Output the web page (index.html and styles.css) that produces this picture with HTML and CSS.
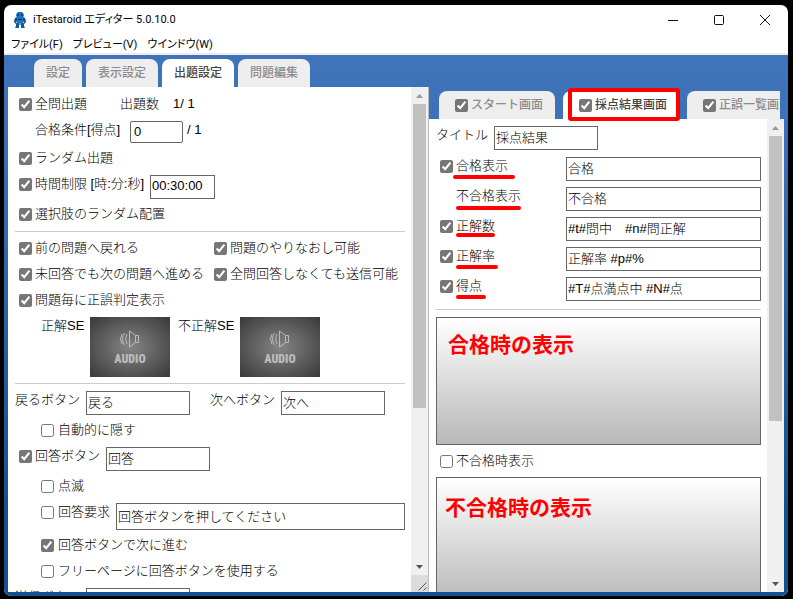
FILE: index.html
```html
<!DOCTYPE html>
<html lang="ja">
<head>
<meta charset="utf-8">
<title>iTestaroid エディター 5.0.10.0</title>
<link rel="stylesheet" href="styles.css">
</head>
<body>
<div class="window">
  <header class="titlebar">
    <svg class="app-icon" viewBox="0 0 12 16" aria-hidden="true">
      <path d="M3 1l1-1h4l1 1 1 2-1 3H3L2 3z" fill="#1670c0"/>
      <path d="M1 6l2-1h6l2 1 1 3-1 3-1-1-1-2H3L2 11l-1 1-1-3z" fill="#0f4f8c"/>
      <path d="M3 5h6v6H3z" fill="#1a78c8"/>
      <path d="M2 11h3v5H1l1-2zM7 11h3v3l1 2H7z" fill="#135a9a"/>
      <path d="M3 2.500h2v1H3zM7 2.500h2v1H7zM4 7h4v1H4zM5.500 11h1v2h-1z" fill="#082b4c"/>
    </svg>
    <h1 class="app-title">iTestaroid エディター 5.0.10.0</h1>
    <div class="window-buttons">
      <button type="button" aria-label="最小化"><svg viewBox="0 0 12 12"><path d="M1 6.500h10"/></svg></button>
      <button type="button" aria-label="最大化"><svg viewBox="0 0 12 12"><rect x="1.500" y="1.500" width="9" height="9" rx="1"/></svg></button>
      <button type="button" aria-label="閉じる"><svg viewBox="0 0 12 12"><path d="M1 1l10 10M11 1L1 11"/></svg></button>
    </div>
  </header>
  <nav class="menubar">
    <button type="button">ファイル(F)</button>
    <button type="button">プレビュー(V)</button>
    <button type="button">ウインドウ(W)</button>
  </nav>
  <main class="workspace">
    <section class="side side-left">
      <div class="tabs tabs-left">
        <button type="button" class="tab">設定</button>
        <button type="button" class="tab">表示設定</button>
        <button type="button" class="tab active">出題設定</button>
        <button type="button" class="tab">問題編集</button>
      </div>
      <div class="pane">
        <form class="content content-left">
          <div class="row">
            <label class="check col-short"><input type="checkbox" checked>全問出題</label>
            <span class="count-label">出題数</span><span>1/ 1</span>
          </div>
          <div class="field-row inset">
            <label class="caption caption-pass" for="pass">合格条件[得点]</label>
            <input class="text number" id="pass" type="text" value="0"><span class="caption">/ 1</span>
          </div>
          <div class="row"><label class="check"><input type="checkbox" checked>ランダム出題</label></div>
          <div class="field-row">
            <label class="check caption-time"><input type="checkbox" checked>時間制限 [時:分:秒]</label>
            <input class="text time" type="text" value="00:30:00" aria-label="時間制限">
          </div>
          <div class="row"><label class="check"><input type="checkbox" checked>選択肢のランダム配置</label></div>
          <hr>
          <div class="pair">
            <label class="check"><input type="checkbox" checked>前の問題へ戻れる</label>
            <label class="check"><input type="checkbox" checked>問題のやりなおし可能</label>
            <label class="check"><input type="checkbox" checked>未回答でも次の問題へ進める</label>
            <label class="check"><input type="checkbox" checked>全問回答しなくても送信可能</label>
            <label class="check"><input type="checkbox" checked>問題毎に正誤判定表示</label>
          </div>
          <div class="media-row">
            <span class="caption se-ok">正解SE</span>
            <button type="button" class="audio">
              <svg viewBox="0 0 20 18" aria-hidden="true"><path d="M9.500 1v16l6-4.500V5.500zM15.500 5.500h3v7h-3M7 4q-3 5 0 10M4.500 3q-4 6 0 12M2 4q-3 5 0 10"/></svg>
              <span>AUDIO</span>
            </button>
            <span class="caption se-ng">不正解SE</span>
            <button type="button" class="audio">
              <svg viewBox="0 0 20 18" aria-hidden="true"><path d="M9.500 1v16l6-4.500V5.500zM15.500 5.500h3v7h-3M7 4q-3 5 0 10M4.500 3q-4 6 0 12M2 4q-3 5 0 10"/></svg>
              <span>AUDIO</span>
            </button>
          </div>
          <hr class="after-media">
          <div class="field-row">
            <label class="caption caption-button" for="back">戻るボタン</label>
            <input class="text short" id="back" type="text" value="戻る">
            <label class="caption caption-next" for="next">次へボタン</label>
            <input class="text short" id="next" type="text" value="次へ">
          </div>
          <div class="row sub"><label class="check"><input type="checkbox">自動的に隠す</label></div>
          <div class="field-row">
            <label class="check caption-answer"><input type="checkbox" checked>回答ボタン</label>
            <input class="text short" type="text" value="回答" aria-label="回答ボタン">
          </div>
          <div class="row sub"><label class="check"><input type="checkbox">点滅</label></div>
          <div class="field-row sub">
            <label class="check caption-request"><input type="checkbox">回答要求</label>
            <input class="text wide" type="text" value="回答ボタンを押してください" aria-label="回答要求">
          </div>
          <div class="row sub"><label class="check"><input type="checkbox" checked>回答ボタンで次に進む</label></div>
          <div class="row sub"><label class="check"><input type="checkbox">フリーページに回答ボタンを使用する</label></div>
          <div class="field-row">
            <label class="caption caption-button" for="send">送信ボタン</label>
            <input class="text short" id="send" type="text">
          </div>
        </form>
        <div class="scroll" aria-hidden="true">
          <i class="arrow up"></i>
          <div class="track track-left"><div class="thumb"></div></div>
          <i class="arrow down"></i>
          <svg class="grip" viewBox="0 0 17 17"><path d="M7.500 15.500l8-8M12.500 15.500l3-3"/></svg>
        </div>
      </div>
    </section>
    <section class="side side-right">
      <div class="tabs tabs-right">
        <div class="tab"><label class="check"><input type="checkbox" checked>スタート画面</label></div>
        <div class="tab active marked"><label class="check"><input type="checkbox" checked>採点結果画面</label></div>
        <div class="tab"><label class="check"><input type="checkbox" checked>正誤一覧画面</label></div>
      </div>
      <div class="pane">
        <form class="content content-right">
          <div class="field-row title-row">
            <label class="caption caption-title" for="title">タイトル</label>
            <input class="text short" id="title" type="text" value="採点結果">
          </div>
          <div class="results">
            <label class="check"><input type="checkbox" checked><span class="mark mark-pass">合格表示</span></label>
            <input class="text" type="text" value="合格" aria-label="合格表示">
            <label class="plain" for="fail"><span class="mark mark-fail">不合格表示</span></label>
            <input class="text" id="fail" type="text" value="不合格">
            <label class="check"><input type="checkbox" checked><span class="mark mark-count">正解数</span></label>
            <input class="text" type="text" value="#t#問中　#n#問正解" aria-label="正解数">
            <label class="check"><input type="checkbox" checked><span class="mark mark-rate">正解率</span></label>
            <input class="text" type="text" value="正解率 #p#%" aria-label="正解率">
            <label class="check"><input type="checkbox" checked><span class="mark mark-score">得点</span></label>
            <input class="text" type="text" value="#T#点満点中 #N#点" aria-label="得点">
          </div>
          <hr>
          <div class="preview preview-pass">合格時の表示</div>
          <div class="row fail-row"><label class="check"><input type="checkbox">不合格時表示</label></div>
          <div class="preview preview-fail">不合格時の表示</div>
        </form>
        <div class="scroll" aria-hidden="true">
          <i class="arrow up"></i>
          <div class="track track-right"><div class="thumb"></div></div>
          <i class="arrow down"></i>
        </div>
      </div>
    </section>
  </main>
</div>
</body>
</html>
```
FILE: styles.css
```css
* {
  box-sizing: border-box;
}

body {
  margin: 0;
  height: 100vh;
  padding: 5px 5px 3px 4px;
  background: #000;
  color: #000;
  font: 300 13px/18px "Liberation Sans", "Noto Sans CJK JP", sans-serif;
  overflow: hidden;
}

button,
input {
  font: inherit;
  color: inherit;
}

button {
  border: 0;
  padding: 0;
  background: none;
}

.window {
  display: flex;
  flex-direction: column;
  height: 100%;
  border-radius: 7px;
  overflow: hidden;
  background: #fff;
}

.titlebar {
  display: flex;
  align-items: center;
  height: 29px;
  padding-left: 10px;
}

.app-icon {
  width: 12px;
  height: 16px;
}

.app-title {
  flex: 1;
  margin: 0 0 0 7px;
  font: 400 11px/18px Roboto, "Noto Sans CJK JP", sans-serif;
  font-feature-settings: "palt";
}

.window-buttons {
  display: flex;
}

.window-buttons button {
  width: 46px;
  height: 28px;
}

.window-buttons svg {
  display: block;
  width: 12px;
  height: 12px;
  margin: 0 auto;
  fill: none;
  stroke: #111;
}

.menubar {
  display: flex;
  gap: 10px;
  height: 21px;
  padding-left: 7px;
  border-bottom: 2px solid #eee;
  font: 400 11px/21px Roboto, "Noto Sans CJK JP", sans-serif;
  font-feature-settings: "palt";
}

.workspace {
  flex: 1;
  min-height: 0;
  display: flex;
  padding: 0 4px 4px;
  background: linear-gradient(#3f74bb, #3b6fb5 20%, #155090 85%);
}

.side {
  display: flex;
  flex-direction: column;
  min-width: 0;
}

.side-left {
  flex: 421 1 0;
}

.side-right {
  flex: 355 1 0;
}

.tabs {
  display: flex;
}

.tabs-left {
  gap: 4px;
  padding: 4px 0 0 26px;
}

.tabs-right {
  position: relative;
  z-index: 1;
  gap: 8px;
  margin-right: 4px;
  padding: 36px 0 0 10px;
  clip-path: inset(0 0 -4px 0);
}

.tab {
  flex: none;
  height: 28px;
  padding: 0 12px;
  border-radius: 8px 8px 0 0;
  background: #eee;
  color: #8c8c8c;
  font-size: 12px;
  font-weight: 500;
  line-height: 28px;
}

.tab.active {
  background: #fff;
  color: #444;
}

.tabs-right .check {
  line-height: 28px;
}

.marked {
  position: relative;
}

.marked::after {
  content: "";
  position: absolute;
  inset: -3px -1px -2px 5px;
  border: 4px solid #f00;
  border-radius: 3px;
}

.pane {
  flex: 1;
  min-height: 0;
  display: flex;
  background: #fff;
}

.side-left .pane {
  border-right: 1px solid #bbb;
}

.content {
  flex: 1;
  min-width: 0;
  overflow: hidden;
}

.content-left {
  padding: 4px 6px 0 7px;
}

.content-right {
  padding: 3px 6px 0 7px;
}

.row {
  display: flex;
  align-items: center;
  height: 26px;
}

.check {
  display: flex;
  align-items: center;
  white-space: nowrap;
}

.check input {
  flex: none;
  width: 13px;
  height: 13px;
  margin: 0 3px 0 4px;
  accent-color: #767676;
}

.caption,
.plain {
  white-space: nowrap;
}

.field-row {
  display: flex;
  align-items: flex-start;
  margin: 4px 0 2px;
}

.inset {
  padding-left: 20px;
}

.sub {
  padding-left: 22px;
}

.sub .check input {
  margin-right: 4px;
}

.text {
  height: 24px;
  min-width: 0;
  padding: 0 1px 3px;
  border: 1px solid #666;
  background: #fff;
}

.short {
  width: 104px;
}

.number {
  width: 53px;
  height: 22px;
  margin-right: 4px;
  border-radius: 2px;
  padding: 0 3px 2px;
}

.time {
  width: 65px;
}

.wide {
  flex: 1;
  height: 27px;
}

.col-short {
  width: 105px;
}

.count-label {
  width: 53px;
}

.caption-pass {
  width: 95px;
}

.caption-time {
  width: 135px;
}

.caption-button {
  width: 71px;
}

.caption-next {
  width: 71px;
  margin-left: 20px;
}

.caption-answer {
  width: 91px;
}

.caption-request {
  width: 79px;
}

.caption-title {
  width: 58px;
}

hr {
  height: 1px;
  margin: 4px 0 3px;
  border: 0;
  background: #ccc;
}

.after-media {
  margin: 6px 0 7px;
}

.pair {
  display: grid;
  grid-template-columns: 1fr 1fr;
  grid-auto-rows: 26px;
}

.media-row {
  display: flex;
  align-items: flex-start;
  margin-top: 4px;
  padding-left: 26px;
}

.se-ok {
  width: 49px;
}

.se-ng {
  width: 62px;
  margin-left: 8px;
}

.audio {
  display: flex;
  flex-direction: column;
  align-items: center;
  width: 80px;
  height: 60px;
  padding-top: 13px;
  background: radial-gradient(#858585, #3c3c3c 95%);
  color: #bbb;
  font: 900 12px/22px "Roboto Condensed", Roboto, sans-serif;
}

.audio svg {
  width: 20px;
  height: 18px;
  fill: none;
  stroke: #bbb;
}

.scroll {
  display: flex;
  flex-direction: column;
  width: 17px;
  background: #f0f0f0;
}

.arrow {
  height: 17px;
  border: solid transparent;
  border-width: 7px 5px 6px;
  flex: none;
}

.arrow::before {
  content: "";
  display: block;
  width: 7px;
  height: 4px;
  background: #555;
  clip-path: polygon(0 0, 100% 0, 50% 100%);
}

.up::before {
  background: #999;
  clip-path: polygon(50% 0, 100% 100%, 0 100%);
}

.track {
  flex: 1;
  padding: 0 2px;
}

.thumb {
  background: #c1c1c1;
}

.track-left .thumb {
  height: 67%;
}

.track-right .thumb {
  height: 65%;
}

.grip {
  width: 17px;
  height: 17px;
  background: #dcdcdc;
  fill: none;
  stroke: #555;
}

.title-row {
  margin-bottom: 7px;
}

.results {
  display: grid;
  grid-template-columns: 2fr 3fr;
  gap: 6px 0;
}

.results .check,
.plain {
  align-self: start;
}

.plain {
  padding-left: 20px;
}

.mark {
  position: relative;
}

.mark::after {
  content: "";
  position: absolute;
  left: 0;
  top: 18px;
  width: 100%;
  height: 4px;
  border-radius: 2px;
  background: #f00;
}

.mark-pass::after {
  left: -3px;
  width: 62px;
}

.mark-count::after {
  top: 16px;
}

.mark-rate::after {
  width: 42px;
}

.mark-score::after {
  width: 30px;
}

.content-right hr {
  margin: 8px 0 7px;
}

.preview {
  height: 128px;
  border: 1px solid #666;
  background: linear-gradient(#fff, #b8b8b8);
  color: #f00;
  font: 700 21px/50px "Noto Sans CJK JP", sans-serif;
  white-space: nowrap;
}

.preview-pass {
  padding-left: 11px;
}

.preview-fail {
  padding-left: 8px;
  line-height: 56px;
}

.fail-row {
  height: 32px;
}
```
